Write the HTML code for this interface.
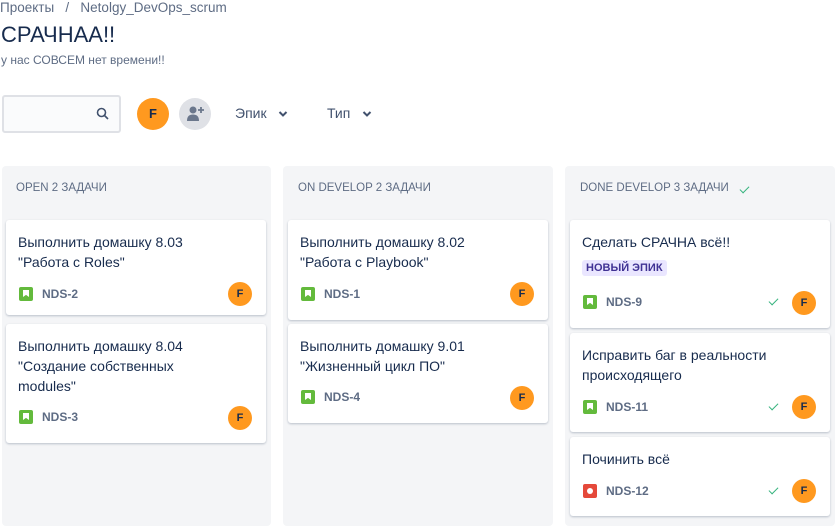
<!DOCTYPE html>
<html><head><meta charset="utf-8"><style>
*{box-sizing:border-box;margin:0;padding:0}
body{width:835px;height:529px;overflow:hidden;background:#fff;font-family:"Liberation Sans","DejaVu Sans",sans-serif;color:#172b4d;position:relative}
.a{position:absolute}
.col{position:absolute;top:166px;height:360px;background:#f4f5f7;border-radius:4px}
.ch{position:absolute;top:182px;font-size:11.5px;color:#5e6c84;white-space:nowrap}
.card{position:absolute;background:#fff;border-radius:3px;box-shadow:0 1px 2px rgba(9,30,66,.25)}
.t{position:absolute;left:12px;top:12px;font-size:14px;line-height:20px;color:#172b4d}
.k{position:absolute;font-size:12px;font-weight:bold;color:#5e6c84}
.ic{position:absolute;width:14px;height:14px;border-radius:2px;background:#63ba3c}
.ic::after{content:"";position:absolute;left:4px;top:3px;width:6px;height:7px;background:#fff;clip-path:polygon(0 0,100% 0,100% 100%,50% 70%,0 100%)}
.av{position:absolute;width:24px;height:24px;border-radius:50%;background:#ff991f;color:#172b4d;font-size:11px;font-weight:bold;text-align:center;line-height:24px}
.chk{position:absolute;width:9px;height:5px;border-left:1.5px solid #36b37e;border-bottom:1.5px solid #36b37e;transform:rotate(-45deg)}
</style></head><body>
<div class="a" style="left:0;top:0;font-size:13.5px;color:#5e6c84">Проекты&nbsp;&nbsp;&nbsp;/&nbsp;&nbsp;&nbsp;Netolgy_DevOps_scrum</div>
<div class="a" style="left:1px;top:22px;font-size:22px;color:#172b4d">СРАЧНАА!!</div>
<div class="a" style="left:1px;top:53px;font-size:12px;color:#5e6c84">у нас СОВСЕМ нет времени!!</div>
<div class="a" style="left:2px;top:95px;width:119px;height:38px;border:2px solid #dfe1e6;border-radius:3px;background:#fafbfc"></div>
<svg class="a" style="left:96px;top:107px" width="13" height="13" viewBox="0 0 13 13"><circle cx="5.5" cy="5.5" r="4" fill="none" stroke="#42526e" stroke-width="1.6"/><path d="M8.5 8.5L12 12" stroke="#42526e" stroke-width="1.6"/></svg>
<div class="av" style="left:137px;top:98px;width:32px;height:32px;line-height:32px;font-size:13px">F</div>
<div class="a" style="left:179px;top:98px;width:32px;height:32px;border-radius:50%;background:#dfe1e6"></div>
<svg class="a" style="left:186px;top:104px" width="20" height="20" viewBox="0 0 20 20"><circle cx="7" cy="6" r="3.5" fill="#6b778c"/><path d="M1 17c0-5 2.5-6.5 6-6.5s6 1.5 6 6.5z" fill="#6b778c"/><path d="M15 3v6M12 6h6" stroke="#6b778c" stroke-width="1.8"/></svg>
<div class="a" style="left:235px;top:105px;font-size:14px;color:#42526e">Эпик</div>
<svg class="a" style="left:278px;top:110px" width="10" height="8"><path d="M1.5 2l3.5 3.5L8.5 2" fill="none" stroke="#42526e" stroke-width="2"/></svg>
<div class="a" style="left:327px;top:105px;font-size:14px;color:#42526e">Тип</div>
<svg class="a" style="left:362px;top:110px" width="10" height="8"><path d="M1.5 2l3.5 3.5L8.5 2" fill="none" stroke="#42526e" stroke-width="2"/></svg>

<div class="col" style="left:2px;width:269px"></div>
<div class="col" style="left:283px;width:270px"></div>
<div class="col" style="left:565px;width:270px"></div>
<div class="ch" style="left:16px">OPEN 2 ЗАДАЧИ</div>
<div class="ch" style="left:298px">ON DEVELOP 2 ЗАДАЧИ</div>
<div class="ch" style="left:580px">DONE DEVELOP 3 ЗАДАЧИ</div>
<div class="chk" style="left:740px;top:186px"></div>

<div class="card" style="left:6px;top:220px;width:260px;height:95px"><div class="t">Выполнить домашку 8.03<br>"Работа с Roles"</div><div class="ic" style="left:13px;top:67px"></div><div class="k" style="left:36px;top:67px">NDS-2</div><div class="av" style="left:222px;top:62px">F</div></div>
<div class="card" style="left:6px;top:324px;width:260px;height:119px"><div class="t">Выполнить домашку 8.04<br>"Создание собственных<br>modules"</div><div class="ic" style="left:13px;top:86px"></div><div class="k" style="left:36px;top:86px">NDS-3</div><div class="av" style="left:222px;top:82px">F</div></div>

<div class="card" style="left:288px;top:220px;width:260px;height:100px"><div class="t">Выполнить домашку 8.02<br>"Работа с Playbook"</div><div class="ic" style="left:13px;top:67px"></div><div class="k" style="left:36px;top:67px">NDS-1</div><div class="av" style="left:222px;top:62px">F</div></div>
<div class="card" style="left:288px;top:324px;width:260px;height:99px"><div class="t">Выполнить домашку 9.01<br>"Жизненный цикл ПО"</div><div class="ic" style="left:13px;top:66px"></div><div class="k" style="left:36px;top:66px">NDS-4</div><div class="av" style="left:222px;top:62px">F</div></div>

<div class="card" style="left:570px;top:220px;width:260px;height:108px"><div class="t">Сделать СРАЧНА всё!!</div><div class="a" style="left:12px;top:40px;background:#eae6ff;color:#403294;font-size:11px;font-weight:bold;padding:2px 4px;border-radius:3px">НОВЫЙ ЭПИК</div><div class="ic" style="left:13px;top:75px"></div><div class="k" style="left:36px;top:75px">NDS-9</div><div class="chk" style="left:199px;top:78px"></div><div class="av" style="left:222px;top:71px">F</div></div>
<div class="card" style="left:570px;top:333px;width:260px;height:99px"><div class="t">Исправить баг в реальности<br>происходящего</div><div class="ic" style="left:13px;top:67px"></div><div class="k" style="left:36px;top:67px">NDS-11</div><div class="chk" style="left:199px;top:70px"></div><div class="av" style="left:222px;top:62px">F</div></div>
<div class="card" style="left:570px;top:437px;width:260px;height:79px"><div class="t">Починить всё</div><div class="a" style="left:13px;top:47px;width:14px;height:14px;border-radius:2px;background:#e5493a"><div class="a" style="left:4px;top:4px;width:6px;height:6px;border-radius:50%;background:#fff"></div></div><div class="k" style="left:36px;top:47px">NDS-12</div><div class="chk" style="left:199px;top:50px"></div><div class="av" style="left:222px;top:42px">F</div></div>
</body></html>
